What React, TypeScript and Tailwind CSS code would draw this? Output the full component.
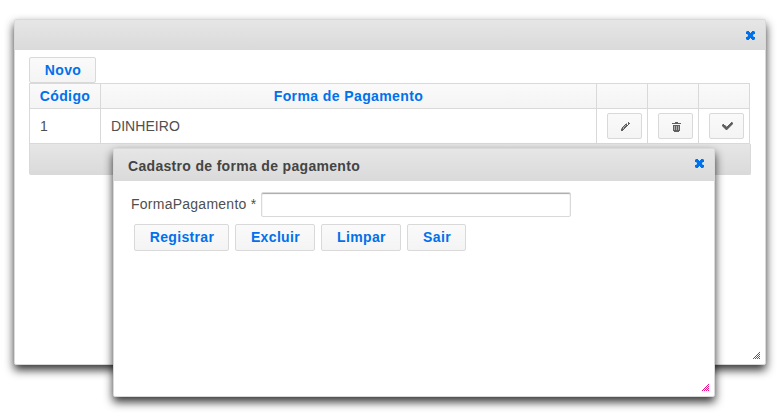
import React from 'react';

const shadow = 'shadow-[0_5px_10px_rgba(0,0,0,0.8)]';

function Pixels({ rows, className }: { rows: string[]; className?: string }) {
  return (
    <svg
      width={rows[0].length}
      height={rows.length}
      viewBox={`0 0 ${rows[0].length} ${rows.length}`}
      shapeRendering="crispEdges"
      fill="currentColor"
      className={className}
    >
      {rows.flatMap((row, y) =>
        row.split('').map((c, x) =>
          c === '.' ? null : (
            <rect key={`${x}-${y}`} x={x} y={y} width="1" height="1" opacity={c === 'o' ? 0.5 : 1} />
          ),
        ),
      )}
    </svg>
  );
}

const closeRows = [
  'o##...##o',
  '####.####',
  '#########',
  '.o#####o.',
  '..#####..',
  '.o#####o.',
  '#########',
  '####.####',
  'o##...##o',
];
const pencilRows = [
  '.......#.',
  '.....o.##',
  '....##.#.',
  '...#o##..',
  '..#o##...',
  '.#o##....',
  'o#o#.....',
  '###......',
  '##.......',
];
const trashRows = [
  '...###...',
  '#########',
  '.........',
  '.#######.',
  '.#o#o#o#.',
  '.#o#o#o#.',
  '.#o#o#o#.',
  '.#o#o#o#.',
  '.#######.',
  '..#####..',
];
const checkRows = [
  '.........#o',
  '........###',
  'o#.....###o',
  '###o..###o.',
  'o###o###o..',
  '.o#####o...',
  '..o###o....',
  '...o#o.....',
];
const gripRows = [
  '......#',
  '.....#.',
  '....#.#',
  '...#.#.',
  '..#.#.#',
  '.#.#.#.',
  '#.#.#.#',
];

function Button({ children, className = '' }: { children: React.ReactNode; className?: string }) {
  return (
    <button
      className={`flex items-center justify-center rounded-[2px] border border-[#d9d9d9] bg-linear-to-b from-[#fafafa] to-[#f4f4f4] font-bold tracking-[0.35px] text-[#0071eb] ${className}`}
    >
      {children}
    </button>
  );
}

const cell = 'border-r border-b border-[#d9d9d9]';
const head = `${cell} flex h-[26px] items-center justify-center border-t bg-linear-to-b from-[#fafafa] to-[#f4f4f4] font-bold tracking-[0.4px] text-[#0071eb]`;
const actions = [
  { rows: pencilRows, pad: 'pt-px pl-[2px]' },
  { rows: trashRows, pad: 'pt-[2px] pl-[2px]' },
  { rows: checkRows, pad: 'pl-[2px]' },
];

export default function App() {
  return (
    <div
      className="relative h-[416px] w-[778px] overflow-hidden bg-white text-[14px] leading-[17px] text-[#4f4f4f]"
      style={{ fontFamily: '"Liberation Sans", Arial, sans-serif' }}
    >
      <section className={`absolute top-[19px] left-[14px] flex h-[346px] w-[752px] flex-col rounded-[2px] border border-[#d9d9d9] bg-white ${shadow}`}>
        <header className="flex h-[30px] shrink-0 items-center justify-end bg-linear-to-b from-[#e6e6e6] to-[#dadada] pt-px pr-[10px] text-[#0071eb]">
          <Pixels rows={closeRows} />
        </header>
        <div className="flex flex-1 flex-col pt-[7px] pl-[14px]">
          <Button className="h-[26px] w-[67px] pl-px">Novo</Button>
          <div className="grid w-[721px] grid-cols-[72px_496px_51px_51px_51px]">
            <div className={`${head} border-l`}>Código</div>
            <div className={head}>Forma de Pagamento</div>
            <div className={head} />
            <div className={head} />
            <div className={head} />
            <div className={`${cell} flex h-[35px] items-center border-l pl-[10px]`}>1</div>
            <div className={`${cell} flex items-center pl-[10px] tracking-[0.05px]`}>DINHEIRO</div>
            {actions.map(({ rows, pad }, i) => (
              <div key={i} className={`${cell} flex items-center justify-end pr-[5px]`}>
                <Button className={`h-[26px] w-[35px] ${pad}`}>
                  <Pixels rows={rows} className="text-[#5f5f5f]" />
                </Button>
              </div>
            ))}
          </div>
          <div className="h-[31px] w-[722px] rounded-b-[2px] border border-t-0 border-[#d9d9d9] bg-linear-to-b from-[#e6e6e6] to-[#dadada]" />
        </div>
        <Pixels rows={gripRows} className="absolute right-[5px] bottom-[5px] text-[#f0088f]" />
      </section>

      <section className={`absolute top-[148px] left-[113px] flex h-[249px] w-[602px] flex-col rounded-[2px] border border-[#d9d9d9] bg-white ${shadow}`}>
        <header className="flex h-[32px] shrink-0 items-center justify-between bg-linear-to-b from-[#e6e6e6] to-[#dadada] pr-[10px] pl-[14px] font-bold">
          <span className="pt-[3px] tracking-[0.32px] text-[#444]">Cadastro de forma de pagamento</span>
          <Pixels rows={closeRows} className="-mt-[4px] text-[#0071eb]" />
        </header>
        <div className="flex flex-col gap-[7px] pt-[11px] pl-[17px]">
          <label className="flex h-[25px] items-center">
            <span className="w-[130px] tracking-[0.25px] whitespace-nowrap">FormaPagamento *</span>
            <input className="h-[25px] w-[310px] rounded-[2px] border border-[#d9d9d9] bg-white shadow-[inset_0_1px_1px_rgba(0,0,0,0.35)]" />
          </label>
          <div className="flex gap-[6px] pl-[3px]">
            <Button className="h-[27px] w-[95px] pl-px">Registrar</Button>
            <Button className="h-[27px] w-[80px] pl-px">Excluir</Button>
            <Button className="h-[27px] w-[80px] pl-px">Limpar</Button>
            <Button className="h-[27px] w-[59px] pl-px">Sair</Button>
          </div>
        </div>
        <Pixels rows={gripRows} className="absolute right-[5px] bottom-[5px] text-[#f0088f]" />
      </section>
    </div>
  );
}
